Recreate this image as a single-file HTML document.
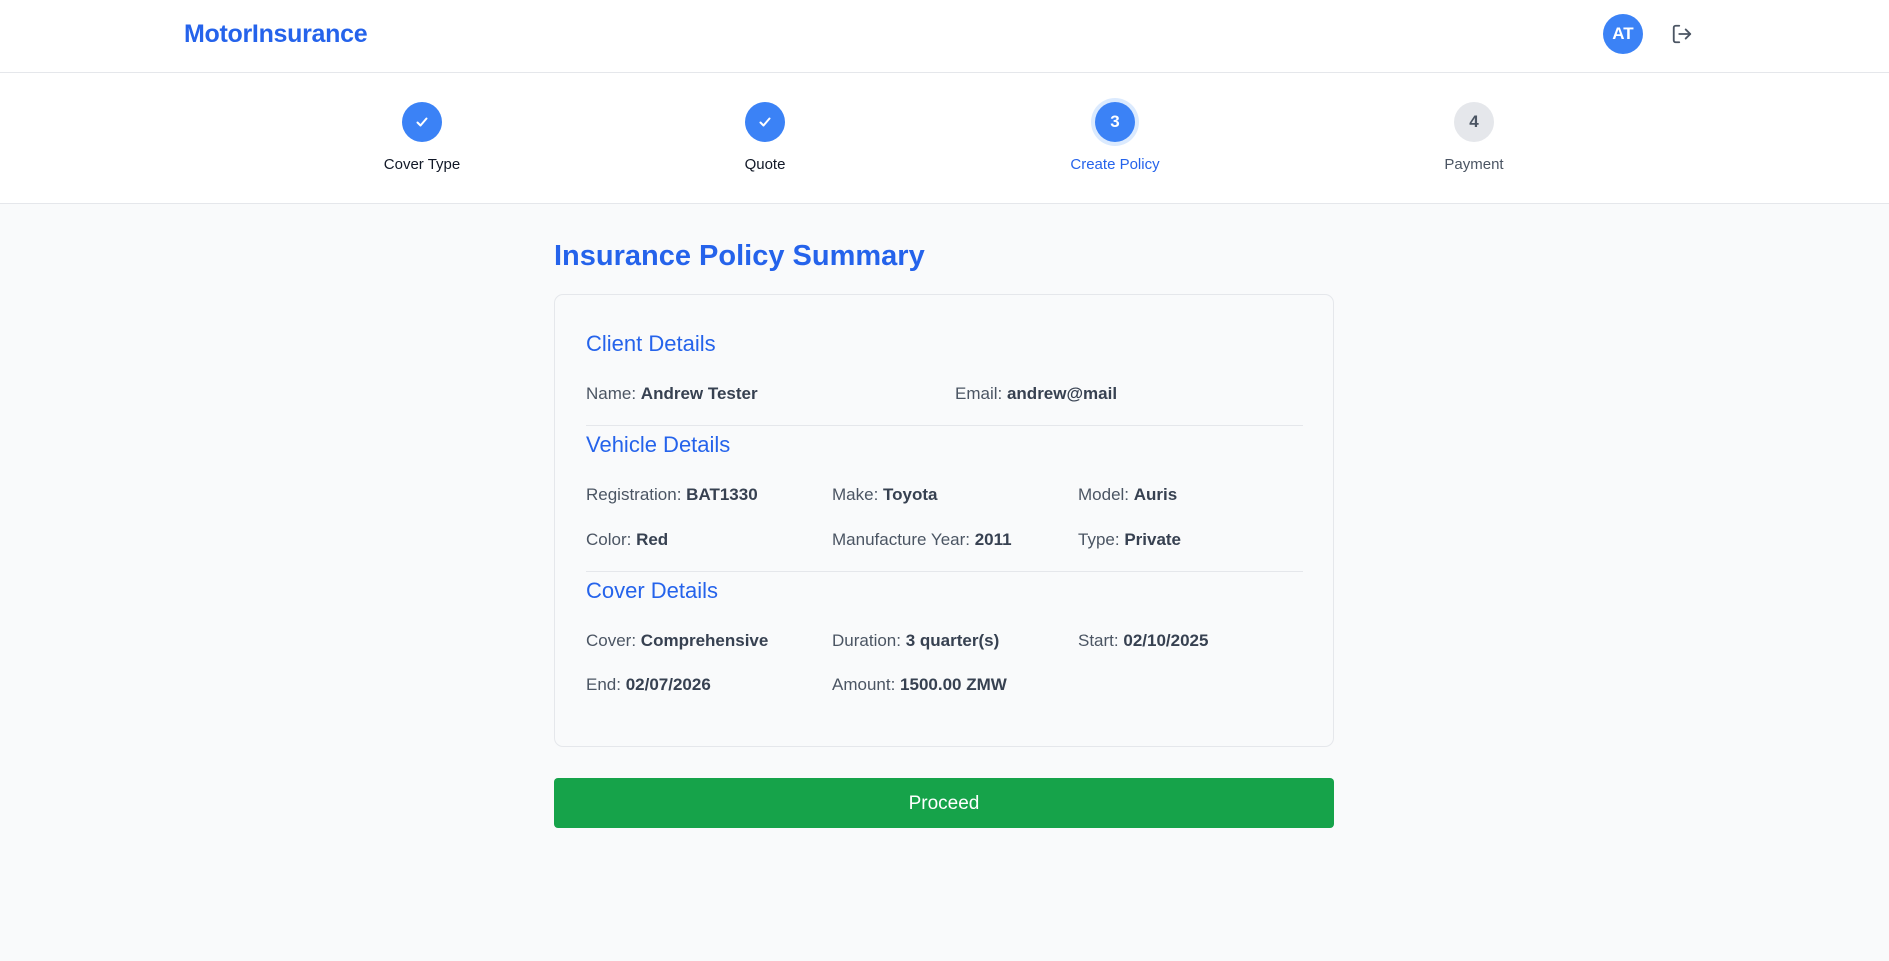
<!DOCTYPE html>
<html><head><meta charset="utf-8"><style>
*{box-sizing:border-box;margin:0;padding:0}
body{width:1889px;height:961px;background:#f9fafb;font-family:"Liberation Sans",sans-serif;position:relative;overflow:hidden}
.hdr{position:absolute;left:0;top:0;width:1889px;height:73px;background:#fff;border-bottom:1px solid #e5e7eb}
.logo{position:absolute;left:184px;top:20px;font-size:25px;font-weight:bold;color:#2563eb;letter-spacing:-0.3px}
.av{position:absolute;left:1603px;top:14px;width:40px;height:40px;border-radius:50%;background:#3b82f6;color:#fff;font-weight:bold;font-size:17px;text-align:center;line-height:40px}
.lo{position:absolute;left:1671px;top:23px}
.steps{position:absolute;left:0;top:73px;width:1889px;height:131px;background:#fff;border-bottom:1px solid #e5e7eb}
.st{position:absolute;top:29px;width:200px;margin-left:-100px;text-align:center}
.c{width:40px;height:40px;border-radius:50%;margin:0 auto;background:#3b82f6;color:#fff;font-weight:bold;font-size:17px;line-height:40px;display:flex;align-items:center;justify-content:center}
.lb{margin-top:14px;font-size:15px;color:#111827}
.t{position:absolute;left:554px;top:240px;font-size:29px;font-weight:bold;color:#2563eb}
.card{position:absolute;left:554px;top:294px;width:780px;height:453px;border:1px solid #e5e7eb;border-radius:9px;background:#f9fafb}
.h{position:absolute;left:31px;font-size:22px;color:#2563eb}
.f{position:absolute;font-size:17px;color:#4b5563}
.f b{color:#374151}
.hr{position:absolute;left:31px;width:717px;border-top:1px solid #e5e7eb}
.btn{position:absolute;left:554px;top:778px;width:780px;height:50px;background:#16a34a;border-radius:4px;color:#fff;font-size:19px;text-align:center;line-height:52px}
</style></head><body>
<div class="hdr"><div class="logo">MotorInsurance</div><div class="av">AT</div>
<svg class="lo" width="22" height="22" viewBox="0 0 24 24" fill="none" stroke="#4b5563" stroke-width="2" stroke-linecap="round" stroke-linejoin="round"><path d="M9 21H5a2 2 0 0 1-2-2V5a2 2 0 0 1 2-2h4"/><path d="M16 17l5-5-5-5"/><path d="M21 12H9"/></svg></div>
<div class="steps">
<div class="st" style="left:422px"><div class="c"><svg width="16" height="16" viewBox="0 0 16 16" fill="none" stroke="#fff" stroke-width="2" stroke-linecap="round" stroke-linejoin="round"><path d="M3.5 8.5l3 3 6-7"/></svg></div><div class="lb">Cover Type</div></div>
<div class="st" style="left:765px"><div class="c"><svg width="16" height="16" viewBox="0 0 16 16" fill="none" stroke="#fff" stroke-width="2" stroke-linecap="round" stroke-linejoin="round"><path d="M3.5 8.5l3 3 6-7"/></svg></div><div class="lb">Quote</div></div>
<div class="st" style="left:1115px"><div class="c" style="box-shadow:0 0 0 4px #dbeafe">3</div><div class="lb" style="color:#2563eb">Create Policy</div></div>
<div class="st" style="left:1474px"><div class="c" style="background:#e5e7eb;color:#4b5563">4</div><div class="lb" style="color:#4b5563">Payment</div></div>
</div>
<div class="t">Insurance Policy Summary</div>
<div class="card">
<div class="h" style="top:36px">Client Details</div>
<div class="f" style="left:31px;top:89px">Name: <b>Andrew Tester</b></div>
<div class="f" style="left:400px;top:89px">Email: <b>andrew@mail</b></div>
<div class="hr" style="top:130px"></div>
<div class="h" style="top:137px">Vehicle Details</div>
<div class="f" style="left:31px;top:190px">Registration: <b>BAT1330</b></div>
<div class="f" style="left:277px;top:190px">Make: <b>Toyota</b></div>
<div class="f" style="left:523px;top:190px">Model: <b>Auris</b></div>
<div class="f" style="left:31px;top:235px">Color: <b>Red</b></div>
<div class="f" style="left:277px;top:235px">Manufacture Year: <b>2011</b></div>
<div class="f" style="left:523px;top:235px">Type: <b>Private</b></div>
<div class="hr" style="top:276px"></div>
<div class="h" style="top:283px">Cover Details</div>
<div class="f" style="left:31px;top:336px">Cover: <b>Comprehensive</b></div>
<div class="f" style="left:277px;top:336px">Duration: <b>3 quarter(s)</b></div>
<div class="f" style="left:523px;top:336px">Start: <b>02/10/2025</b></div>
<div class="f" style="left:31px;top:380px">End: <b>02/07/2026</b></div>
<div class="f" style="left:277px;top:380px">Amount: <b>1500.00 ZMW</b></div>
</div>
<div class="btn">Proceed</div>
</body></html>
